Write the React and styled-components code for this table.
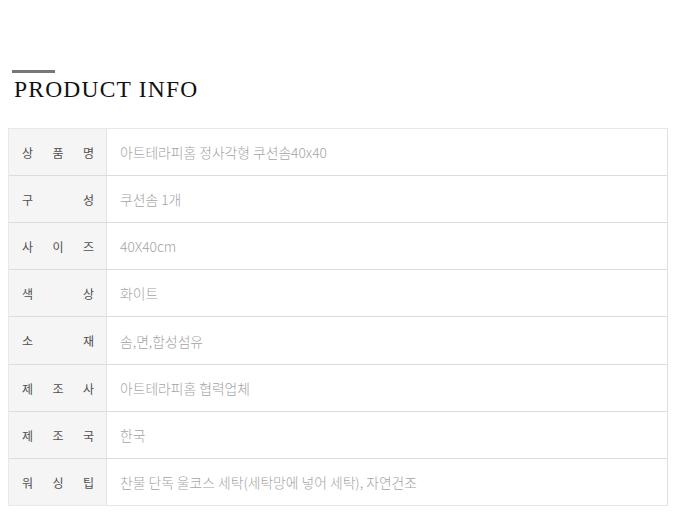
import React from 'react';
import styled, { createGlobalStyle } from 'styled-components';

const GlobalStyle = createGlobalStyle`
  html, body {
    margin: 0;
    padding: 0;
    background: #fff;
  }
`;

const Page = styled.div`
  padding: 70px 11px 0 8px;
  font-family: 'Noto Sans CJK KR', 'Noto Sans', sans-serif;
`;

const TitleBar = styled.div`
  width: 43px;
  height: 3px;
  margin-left: 4px;
  background: #777;
`;

const Title = styled.h2`
  margin: 3px 0 25px 6px;
  font-family: 'Liberation Serif', serif;
  font-weight: normal;
  font-size: 23.5px;
  line-height: 27px;
  letter-spacing: 1.2px;
  color: #111;
`;

const Table = styled.div`
  border: 1px solid #e8e8e8;
  border-right-color: #e0e0e0;
`;

const Row = styled.div`
  display: flex;
  height: ${(p) => (p.$tall ? 47 : 46)}px;
  & + & {
    border-top: 1px solid #dcdcdc;
  }
`;

const Label = styled.div`
  width: 98px;
  flex: none;
  box-sizing: border-box;
  padding: 0 12px 0 13px;
  background: #f5f5f5;
  border-right: 1px solid #e2e2e2;
  display: flex;
  align-items: center;
  justify-content: space-between;
  font-size: 12px;
  color: #4f4f4f;
`;

const Value = styled.div`
  display: flex;
  align-items: center;
  padding-left: 13px;
  font-size: 13.8px;
  font-weight: 300;
  color: #a4a4a4;
`;

const rows = [
  ['상품명', '아트테라피홈 정사각형 쿠션솜40x40'],
  ['구성', '쿠션솜 1개'],
  ['사이즈', '40X40cm'],
  ['색상', '화이트'],
  ['소재', '솜,면,합성섬유'],
  ['제조사', '아트테라피홈 협력업체'],
  ['제조국', '한국'],
  ['워싱팁', '찬물 단독 울코스 세탁(세탁망에 넣어 세탁), 자연건조'],
];

export default function App() {
  return (
    <>
      <GlobalStyle />
      <Page>
        <TitleBar />
        <Title>PRODUCT INFO</Title>
        <Table>
          {rows.map(([label, value], i) => (
            <Row key={label} $tall={i === 4}>
              <Label>
                {label.split('').map((ch, j) => (
                  <span key={j}>{ch}</span>
                ))}
              </Label>
              <Value>{value}</Value>
            </Row>
          ))}
        </Table>
      </Page>
    </>
  );
}
